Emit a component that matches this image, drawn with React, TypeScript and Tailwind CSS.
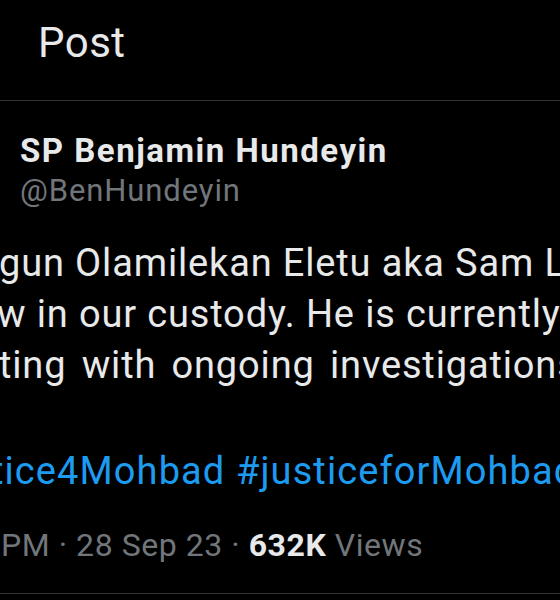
const font = { fontFamily: 'Roboto, "Noto Sans", sans-serif' };

export default function App() {
  return (
    <div className="w-[560px] h-[600px] bg-black overflow-hidden text-[#e7e9ea]" style={font}>
      <div className="pt-[18px] pb-[32px] pl-[38px] text-[42px] leading-[50px] tracking-[0.5px]">Post</div>
      <div className="h-px bg-[#2f3336]" />

      <div className="pt-[30px] pl-[20px]">
        <div className="text-[33px] leading-[40px] font-bold tracking-[1.5px]">SP Benjamin Hundeyin</div>
        <div className="text-[31px] leading-[40px] text-[#71767b] tracking-[0.9px]">@BenHundeyin</div>
      </div>

      <div className="mt-[27px] text-[38px] leading-[51px] whitespace-nowrap tracking-[0.85px]">
        <div className="ml-[-1px]">gun Olamilekan Eletu aka Sam Larry</div>
        <div className="ml-[-3px]">w in our custody. He is currently</div>
        <div className="ml-[-1px] [word-spacing:5px]">ting with ongoing investigations.</div>
      </div>

      <div className="mt-[55px] text-[38px] leading-[51px] whitespace-nowrap text-[#1d9bf0] ml-[-9px] tracking-[1.1px]">
        tice4Mohbad #justiceforMohbad
      </div>

      <div className="mt-[28px] text-[32px] leading-[40px] whitespace-nowrap text-[#71767b] ml-[1px] tracking-[0.55px]">
        PM · 28 Sep 23 · <span className="font-bold text-[#e7e9ea]">632K</span> Views
      </div>

      <div className="mt-[28px] h-px bg-[#2f3336]" />
    </div>
  );
}
